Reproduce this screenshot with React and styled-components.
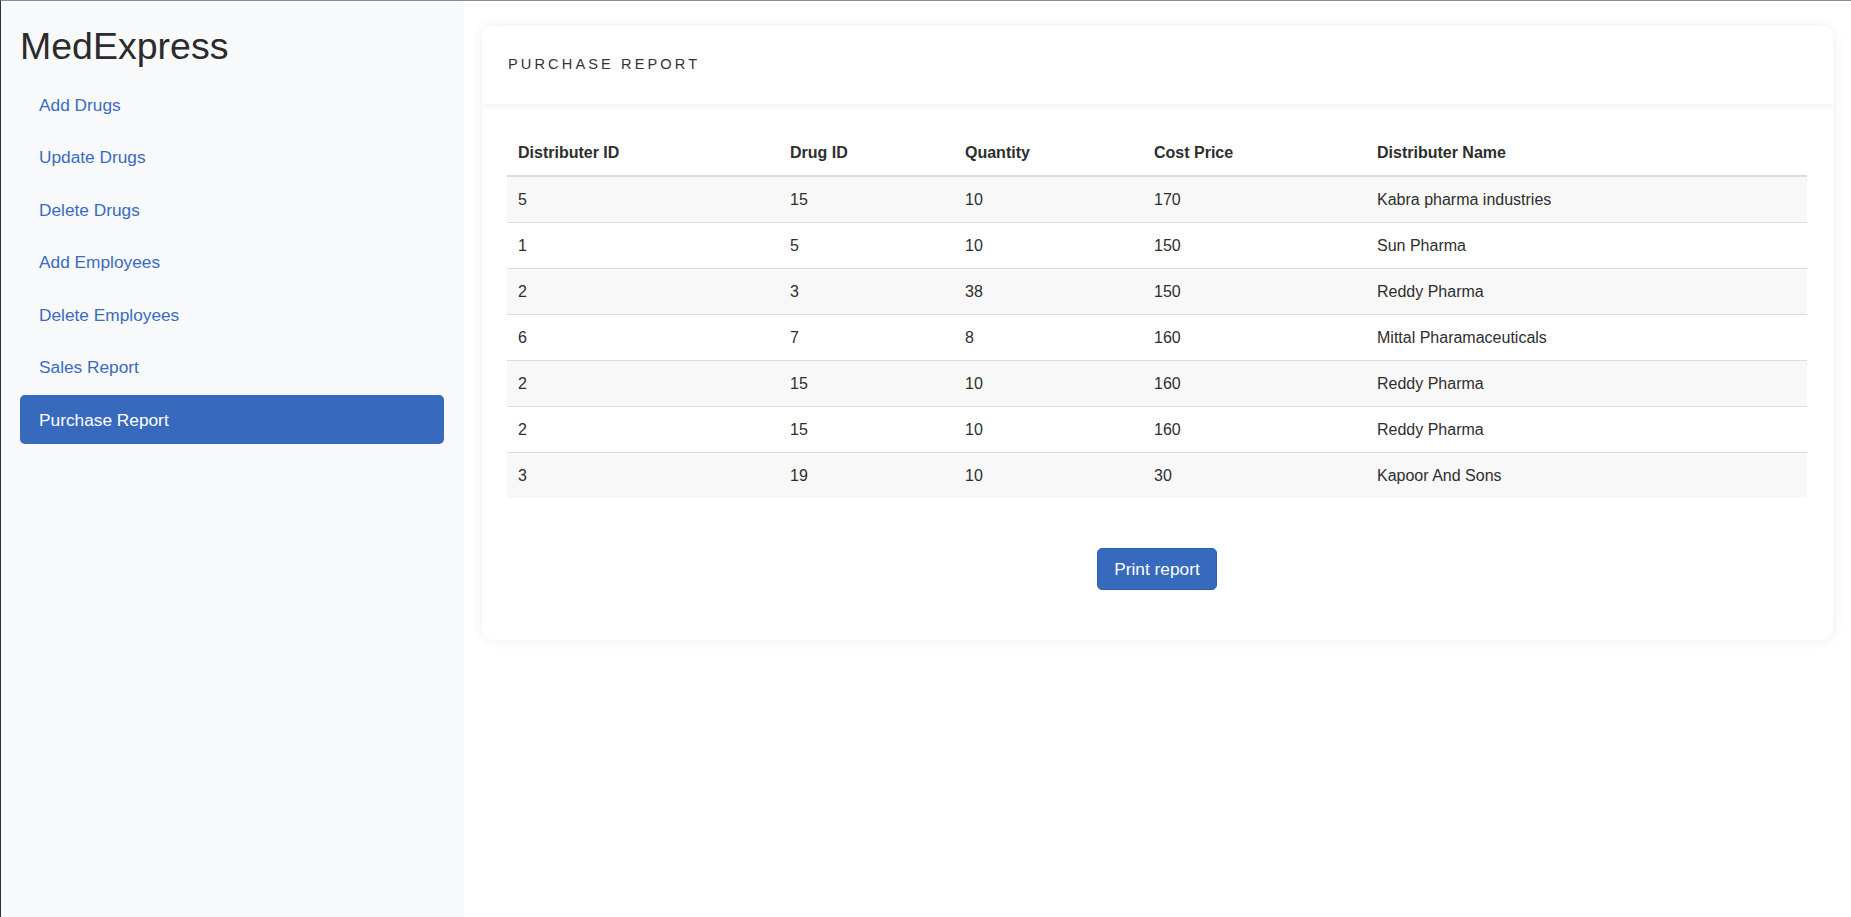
import React from "react";
import styled, { createGlobalStyle } from "styled-components";

const GlobalStyle = createGlobalStyle`
  html, body { margin: 0; padding: 0; }
  body {
    font-family: "Liberation Sans", Arial, sans-serif;
    color: #333;
    background: #fff;
  }
  * { box-sizing: border-box; }
`;

const Page = styled.div`
  display: flex;
  min-height: 917px;
  border-top: 1px solid #8c8c8c;
  border-left: 1px solid #333;
`;

const Sidebar = styled.aside`
  width: 463px;
  flex: 0 0 463px;
  background: #f8f9fa;
  padding: 23px 20px 0 19px;
`;

const Brand = styled.h1`
  margin: 0 0 11px 0;
  font-size: 37.5px;
  line-height: 45px;
  font-weight: 400;
  color: #2b2b2b;
`;

const Nav = styled.nav`
  display: flex;
  flex-direction: column;
  gap: 3.5px;
`;

const NavLink = styled.a`
  display: block;
  height: 49px;
  padding: 11.5px 19px;
  font-size: 17.3px;
  line-height: 26px;
  border-radius: 5px;
  text-decoration: none;
  cursor: pointer;
  color: ${(p) => (p.$active ? "#fff" : "#3a6bc0")};
  background: ${(p) => (p.$active ? "#3769bd" : "transparent")};
`;

const Main = styled.main`
  flex: 1;
  padding: 25px 19px 0 18px;
`;

const Card = styled.section`
  background: #fff;
  border-radius: 12px;
  box-shadow: 0 0 14px rgba(0, 0, 0, 0.07);
  overflow: hidden;
`;

const CardHeader = styled.header`
  position: relative;
  z-index: 1;
  height: 78px;
  padding: 0 26px;
  display: flex;
  align-items: center;
  background: #fff;
  box-shadow: 0 3px 6px rgba(0, 0, 0, 0.05);
`;

const CardTitle = styled.h2`
  margin: 0 0 2px;
  font-size: 14.6px;
  font-weight: 400;
  letter-spacing: 3.1px;
  color: #333;
  text-transform: uppercase;
`;

const CardBody = styled.div`
  padding: 24px 26px 0 25px;
`;

const Table = styled.table`
  width: 100%;
  border-collapse: collapse;
  table-layout: fixed;
  font-size: 16px;
  color: #2e2e2e;
`;

const Th = styled.th`
  text-align: left;
  font-weight: 700;
  padding: 13px 11px 11px;
  line-height: 23px;
  border-bottom: 2px solid #dcdcdc;
`;

const Tr = styled.tr`
  background: ${(p) => (p.$striped ? "#f8f8f8" : "#fff")};
`;

const Td = styled.td`
  padding: 11px 11px;
  line-height: 23px;
  border-top: ${(p) => (p.$first ? "none" : "1px solid #dcdcdc")};
`;

const Actions = styled.div`
  display: flex;
  justify-content: center;
  padding: 50px 0;
`;

const PrintButton = styled.button`
  font-family: "Liberation Sans", Arial, sans-serif;
  font-size: 17.3px;
  line-height: 26px;
  padding: 7px 16px;
  color: #fff;
  background: #3769bd;
  border: 1px solid #3060b0;
  border-radius: 5px;
  cursor: pointer;
`;

const links = [
  "Add Drugs",
  "Update Drugs",
  "Delete Drugs",
  "Add Employees",
  "Delete Employees",
  "Sales Report",
  "Purchase Report",
];

const columns = [
  { label: "Distributer ID", width: 272 },
  { label: "Drug ID", width: 175 },
  { label: "Quantity", width: 189 },
  { label: "Cost Price", width: 223 },
  { label: "Distributer Name", width: 441 },
];

const rows = [
  ["5", "15", "10", "170", "Kabra pharma industries"],
  ["1", "5", "10", "150", "Sun Pharma"],
  ["2", "3", "38", "150", "Reddy Pharma"],
  ["6", "7", "8", "160", "Mittal Pharamaceuticals"],
  ["2", "15", "10", "160", "Reddy Pharma"],
  ["2", "15", "10", "160", "Reddy Pharma"],
  ["3", "19", "10", "30", "Kapoor And Sons"],
];

export default function App() {
  return (
    <>
      <GlobalStyle />
      <Page>
        <Sidebar>
          <Brand>MedExpress</Brand>
          <Nav>
            {links.map((l) => (
              <NavLink key={l} $active={l === "Purchase Report"}>
                {l}
              </NavLink>
            ))}
          </Nav>
        </Sidebar>
        <Main>
          <Card>
            <CardHeader>
              <CardTitle>Purchase Report</CardTitle>
            </CardHeader>
            <CardBody>
              <Table>
                <colgroup>
                  {columns.map((c) => (
                    <col key={c.label} style={{ width: c.width }} />
                  ))}
                </colgroup>
                <thead>
                  <tr>
                    {columns.map((c) => (
                      <Th key={c.label}>{c.label}</Th>
                    ))}
                  </tr>
                </thead>
                <tbody>
                  {rows.map((r, i) => (
                    <Tr key={i} $striped={i % 2 === 0}>
                      {r.map((cell, j) => (
                        <Td key={j} $first={i === 0}>
                          {cell}
                        </Td>
                      ))}
                    </Tr>
                  ))}
                </tbody>
              </Table>
              <Actions>
                <PrintButton>Print report</PrintButton>
              </Actions>
            </CardBody>
          </Card>
        </Main>
      </Page>
    </>
  );
}
